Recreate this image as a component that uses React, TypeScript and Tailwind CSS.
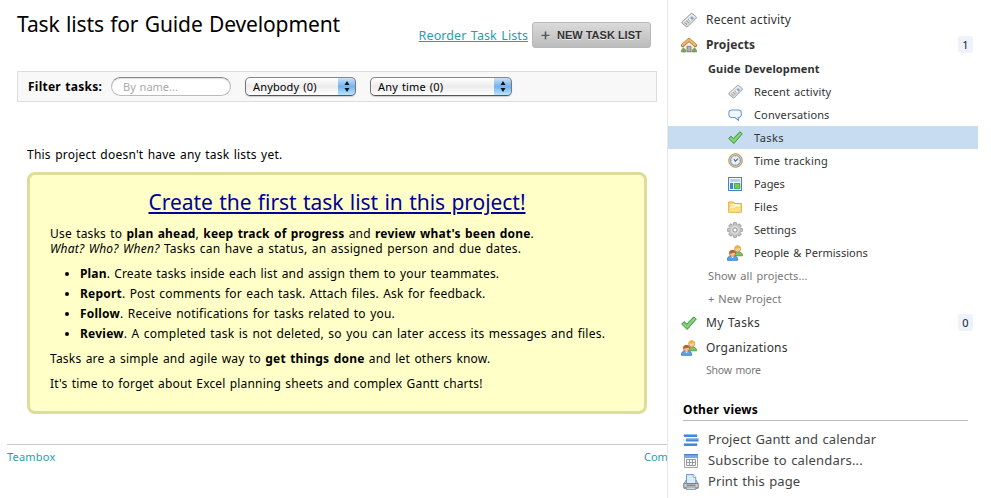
import type { ReactNode } from 'react';

function Icon({ size = 16, children }: { size?: number; children: ReactNode }) {
  return (
    <svg width={size} height={size} viewBox="0 0 16 16" className="shrink-0">
      {children}
    </svg>
  );
}

function TagIcon({ size }: { size?: number }) {
  return (
    <Icon size={size}>
      <path d="M1 9.800 10 1.600c.5-.4 1-.4 1.500 0l3.700 3.200c.4.400.4.900 0 1.400L6.800 14.600c-.5.500-1 .5-1.500.1L1 11.200c-.4-.4-.4-.9 0-1.400z" fill="#d6d6d6" stroke="#9a9a9a" strokeWidth=".9" />
      <path d="m2.400 10.300 8.200-7.400 3.300 2.800" fill="none" stroke="#f7f7f7" strokeWidth="1" />
      <path d="m3.600 10.500 2.500 2.100M5.500 8.800l2.500 2.100M7.300 7.200l1.700 1.500" stroke="#969696" strokeWidth="1" />
      <path d="m9.600 5.600 2 1.700-1.800 1.800-2-1.700z" fill="#f2f6fb" />
      <path d="m10.700 4.600 2.100 1.700-1.700 1.600-2-1.700z" fill="#6fa8e2" />
    </Icon>
  );
}

function HomeIcon() {
  return (
    <Icon>
      <path d="M2.300 8 8 3l5.700 5v6.700H2.300z" fill="#f7f4ec" stroke="#b9b3a6" strokeWidth=".8" />
      <path d="M6 9.300h4v5.400H6z" fill="#b5b1ad" stroke="#7f7b77" strokeWidth=".9" />
      <path d="M1.800 8.300 8 2.700l6.200 5.600" fill="none" stroke="#a96821" strokeWidth="3.500" strokeLinejoin="round" strokeLinecap="round" />
      <path d="M1.800 8.100 8 2.600l6.200 5.500" fill="none" stroke="#ecb96c" strokeWidth="2.200" strokeLinejoin="round" strokeLinecap="round" />
      <path d="M.5 15c-.4-2.200.7-3.700 2.300-3.500 1.500.2 2.200 1.700 1.800 3.500zM11.400 15c-.4-1.900.4-3.300 1.800-3.500 1.600-.1 2.700 1.400 2.300 3.500z" fill="#6cb85a" stroke="#3b7f35" strokeWidth=".5" />
      <circle cx="2.600" cy="13.300" r=".7" fill="#e16350" />
      <circle cx="13.400" cy="13.300" r=".7" fill="#e16350" />
    </Icon>
  );
}

function BubbleIcon({ size }: { size?: number }) {
  return (
    <Icon size={size}>
      <path d="M4.200 2.300h7.800a3.200 3.200 0 0 1 3.200 3.200v2.200a3.200 3.200 0 0 1-3.200 3.200h-.4l.3 3.200-3.900-3.200H4.200A3.200 3.200 0 0 1 1 7.700V5.500a3.200 3.200 0 0 1 3.200-3.200z" fill="#f1f8ff" stroke="#6a98d2" strokeWidth="1.200" />
    </Icon>
  );
}

function CheckIcon({ size }: { size?: number }) {
  return (
    <Icon size={size}>
      <path d="m.7 9 2.400-2.500 2.700 2.600 6.800-7.200L15.300 4 6.200 14.500z" fill="#73cb68" stroke="#3c9943" strokeWidth="1" strokeLinejoin="round" />
      <path d="m2.300 8.700 3.600 3.200 8-8.500" fill="none" stroke="#9be08e" strokeWidth="1" />
    </Icon>
  );
}

function ClockIcon({ size }: { size?: number }) {
  return (
    <Icon size={size}>
      <circle cx="8" cy="8" r="7.300" fill="#ecc886" stroke="#a98b58" strokeWidth=".9" />
      <circle cx="8" cy="8" r="5.300" fill="#edf5fd" stroke="#8ba5c6" strokeWidth="1.200" />
      <path d="M8 3.500v1M8 11.500v1M3.500 8h1M11.500 8h1" stroke="#8ba0b5" strokeWidth=".8" />
      <path d="m6.300 6.200 1.400 2.600 3-2.700" fill="none" stroke="#566f8a" strokeWidth="1.200" />
    </Icon>
  );
}

function PagesIcon({ size }: { size?: number }) {
  return (
    <Icon size={size}>
      <path d="M.6.600h14.800v14.800H.6z" fill="#f4faff" stroke="#4a82c5" strokeWidth="1.200" />
      <path d="M2.400 2.400h11.200v3H2.400z" fill="#a6d0f5" />
      <path d="M2.300 6.900h3.600v6.800H2.300z" fill="#3f84c6" />
      <path d="M7.400 7.400h6.100v6H7.400z" fill="#6cc95d" stroke="#3d9a41" strokeWidth="1" />
    </Icon>
  );
}

function FolderIcon({ size }: { size?: number }) {
  return (
    <Icon size={size}>
      <path d="M.8 14V2.300h5.700l1.200 1.700h7.500V14z" fill="#f9d87a" stroke="#e0a93a" strokeWidth="1.100" />
      <path d="M3.500 5.600h10M2.200 8.200h4.600l1.400-1.300h5.800" stroke="#fffbe3" strokeWidth="1.300" fill="none" />
      <path d="M1.500 9.400h13v4h-13z" fill="#fde08a" />
    </Icon>
  );
}

function GearIcon() {
  return (
    <Icon>
      {[0, 45, 90, 135].map((angle) => (
        <rect key={angle} x="6.300" y=".5" width="3.400" height="15" rx="1" fill="#c2c2c2" stroke="#909090" strokeWidth=".8" transform={`rotate(${angle} 8 8)`} />
      ))}
      <circle cx="8" cy="8" r="5.600" fill="#c6c6c6" />
      <circle cx="8" cy="8" r="4.200" fill="#dadada" />
      <circle cx="8" cy="8" r="2.100" fill="#fff" stroke="#949494" strokeWidth="1" />
    </Icon>
  );
}

function PeopleIcon() {
  return (
    <Icon>
      <path d="M7.200 10.800c0-2.800 1.100-4.100 3.400-4.100 3 0 4.900 1.200 4.900 4.100z" fill="#7cc860" stroke="#458f3d" strokeWidth=".8" />
      <circle cx="10.700" cy="3.900" r="3" fill="#f8cda0" stroke="#bd7c2f" strokeWidth=".6" />
      <path d="M7.600 4C7.200.9 9.300.2 11 .4c2.200.1 3.500 1.600 2.900 4-.9-.3-1.100-.9-1.200-1.700-1.300.8-3.500.5-5.100 1.300z" fill="#f0b23c" />
      <path d="M.5 15.300c-.2-3 1.200-4.400 3.500-4.400h2.900c2.500 0 3.900 1.500 3.700 4.400z" fill="#5da4ef" stroke="#2d6dbb" strokeWidth=".8" />
      <circle cx="5.500" cy="8.500" r="3.100" fill="#f5bd92" stroke="#9d5d31" strokeWidth=".6" />
      <path d="M2.300 8.800C1.800 5.600 3.900 4.900 5.600 5c2.300.1 3.600 1.500 3.200 3.800-.9-.3-1.200-.8-1.400-1.400-1.500.8-3.500.5-5.100 1.400z" fill="#b06532" />
      <path d="M3.900 11.500h3.200l-1.600 1.600z" fill="#fff" />
    </Icon>
  );
}

function GanttIcon() {
  return (
    <Icon>
      <path d="M0 3.500h15M0 8h16M0 12.500h15" stroke="#c3dcf6" strokeWidth="1" />
      <path d="M1 2h13v3H1zM3 6.500h12.500v3H3zM1 11h13v3H1z" fill="#4588d6" />
      <path d="M1 2h13v1H1zM3 6.500h12.500v1H3zM1 11h13v1H1z" fill="#8dbcf0" />
    </Icon>
  );
}

function CalendarIcon() {
  return (
    <Icon>
      <path d="M1.500 2h13v12.500h-13z" fill="#fafafa" stroke="#a3a3a3" />
      <path d="M1 1h14v4H1z" fill="#79aae6" />
      <path d="M1 1h14v1.200H1z" fill="#4a82c9" />
      <path d="M3.500 6.500h9v6h-9zM6.500 6.500v6M9.500 6.500v6M3.500 9.500h9" fill="none" stroke="#999" strokeWidth="1" />
    </Icon>
  );
}

function PrinterIcon() {
  return (
    <Icon>
      <path d="M1 9.500 3.200 6h9.600L15 9.500v4.800H1z" fill="#d8d8d8" stroke="#858585" strokeWidth=".9" />
      <path d="M3.500.6h6.700l2.600 2.600v6.300H3.500z" fill="#d9ebff" stroke="#5e8fca" strokeWidth=".9" />
      <path d="M10.200.6v2.700h2.600" fill="#fff" stroke="#5e8fca" strokeWidth=".7" />
      <path d="M.8 9.500h14.400v4.300H.8z" fill="#cfcfcf" stroke="#777" strokeWidth=".8" />
      <path d="M3.500 10.600h9v1.200h-9z" fill="#777" />
      <path d="M3.200 13h9.600v2.400H3.200z" fill="#c9defa" stroke="#828282" strokeWidth=".8" />
    </Icon>
  );
}

function PlusIcon() {
  return (
    <svg width="9" height="9" viewBox="0 0 9 9" className="shrink-0">
      <path d="M4.500 1v8M1 5.500h8" stroke="#f4f4f4" strokeWidth="1.200" />
      <path d="M4.500.500v8M.5 4.500h8" stroke="#555" strokeWidth="1.600" />
    </svg>
  );
}

function Select({ label, className }: { label: string; className: string }) {
  return (
    <div className={`flex h-[19px] overflow-hidden rounded-[5px] border border-[#777] border-t-[#888] border-b-[#555] bg-linear-to-b from-white via-[#ececec] to-white shadow-[0_1px_1px_#ccc] ${className}`}>
      <span className="flex-1 pl-[7px] text-[11px] leading-[17px] tracking-[0.15px] [word-spacing:1px]">{label}</span>
      <span className="-my-px -mr-px flex w-[18px] items-center justify-center rounded-r-[5px] border border-l-0 border-[#34539c] border-t-[#2b2b99] bg-linear-to-b from-[#cae3fa] via-[#73b2ef] to-[#b9e5ff]">
        <svg width="6" height="11" viewBox="0 0 6 11">
          <path d="m3 0 2.500 4h-5zM3 11 .5 7h5z" fill="#111" />
        </svg>
      </span>
    </div>
  );
}

function MainRow({ icon, label, className = '', count }: { icon: ReactNode; label: string; className?: string; count?: string }) {
  return (
    <div className="flex h-[25px] items-center pr-[5px] pl-[13px]">
      {icon}
      <span className={`ml-[9px] flex-1 text-[12px] ${className}`}>{label}</span>
      {count && <span className="flex h-[17px] w-[15px] items-center justify-center rounded-[3px] bg-[#ecf3fa] text-[11px] text-[#222]">{count}</span>}
    </div>
  );
}

function SubRow({ icon, label, className = '', active = false }: { icon: ReactNode; label: string; className?: string; active?: boolean }) {
  return (
    <div className={`flex h-[23px] items-center pl-[59px] ${active ? 'bg-[#c7dcf0]' : ''}`}>
      <span className="flex w-4 justify-center">{icon}</span>
      <span className={`ml-[11px] text-[11px] ${className}`}>{label}</span>
    </div>
  );
}

function ViewRow({ icon, label, className = '' }: { icon: ReactNode; label: string; className?: string }) {
  return (
    <div className="flex h-[21px] items-center">
      {icon}
      <span className={`ml-[9px] text-[13px] ${className}`}>{label}</span>
    </div>
  );
}

function Sidebar() {
  return (
    <aside className="h-[498px] w-[311px] shrink-0 border-l border-[#e8e8e8] pt-[7px] whitespace-nowrap text-[#333] [word-spacing:1px]">
      <MainRow icon={<TagIcon />} label="Recent activity" className="tracking-[0.2px]" />
      <MainRow icon={<HomeIcon />} label="Projects" className="font-bold tracking-[0.12px]" count="1" />
      <div className="flex h-[23px] items-center pl-10 text-[11px] font-bold tracking-[0.14px]">Guide Development</div>
      <SubRow icon={<TagIcon size={15} />} label="Recent activity" className="tracking-[0.12px]" />
      <SubRow icon={<BubbleIcon size={14} />} label="Conversations" className="tracking-[0.14px]" />
      <SubRow icon={<CheckIcon size={15} />} label="Tasks" className="tracking-[0.4px]" active />
      <SubRow icon={<ClockIcon size={15} />} label="Time tracking" className="tracking-[0.2px]" />
      <SubRow icon={<PagesIcon size={14} />} label="Pages" className="-tracking-[0.1px]" />
      <SubRow icon={<FolderIcon size={14} />} label="Files" className="tracking-[0.2px]" />
      <SubRow icon={<GearIcon />} label="Settings" className="tracking-[0.05px]" />
      <SubRow icon={<PeopleIcon />} label="People &amp; Permissions" className="tracking-normal" />
      <div className="flex h-[23px] items-center pl-10 text-[11px] tracking-[0.1px] text-[#777]">Show all projects...</div>
      <div className="flex h-[23px] items-center pl-10 text-[11px] tracking-[0.04px] text-[#777]">+ New Project</div>
      <MainRow icon={<CheckIcon />} label="My Tasks" className="tracking-[0.32px]" count="0" />
      <MainRow icon={<PeopleIcon />} label="Organizations" className="tracking-[0.2px]" />
      <div className="flex h-[22px] items-center pb-px pl-[38px] text-[10.500px] tracking-[-0.2px] text-[#777]">Show more</div>
      <section className="mt-[19px] mr-2.5 ml-[15px]">
        <h3 className="h-5 border-b border-[#bbb] text-[12px] leading-[17px] font-bold tracking-[0.2px] text-black">Other views</h3>
        <div className="mt-[8px] text-[#444]">
          <ViewRow icon={<GanttIcon />} label="Project Gantt and calendar" className="tracking-[0.08px]" />
          <ViewRow icon={<CalendarIcon />} label="Subscribe to calendars..." className="tracking-[0.17px]" />
          <ViewRow icon={<PrinterIcon />} label="Print this page" className="tracking-[0.08px]" />
        </div>
      </section>
    </aside>
  );
}

export default function App() {
  return (
    <div className="flex h-[498px] w-[991px] overflow-hidden bg-white font-['Noto_Sans',sans-serif] text-[12px] leading-[15px] text-black">
      <main className="h-[498px] w-[667px] shrink-0 overflow-hidden whitespace-nowrap [word-spacing:1px]">
        <header className="flex h-[71px] items-start pr-4 pl-[17px]">
          <h1 className="mt-[10px] flex-1 text-[21px] leading-7 -tracking-[0.12px]">Task lists for Guide Development</h1>
          <a className="mt-[27px] text-[12.5px] leading-[17px] tracking-[0.1px] text-[#2a9dab] underline">Reorder Task Lists</a>
          <button className="mt-[22px] ml-1 flex h-[26px] w-[119px] items-center rounded-[3px] border border-[#b8b8b8] bg-linear-to-b from-[#dadada] to-[#bcbcbc] pt-px pl-2 font-['Liberation_Sans',sans-serif] text-[11px] font-bold text-[#333] [text-shadow:0_1px_0_#eee] [word-spacing:0]">
            <PlusIcon />
            <span className="ml-[7px]">NEW TASK LIST</span>
          </button>
        </header>
        <form className="ml-[17px] flex h-[31px] w-[640px] items-center border border-[#ddd] bg-[#f8f8f8] pl-2.5">
          <label className="w-[83px] font-bold tracking-[0.25px]">Filter tasks:</label>
          <span className="h-[19px] w-[120px] rounded-full border border-[#bbb] border-t-[#888] bg-white pl-[11px] text-[11px] leading-[18px] text-[#aaa] shadow-[inset_0_1px_1px_#ddd]">By name...</span>
          <Select label="Anybody (0)" className="ml-[14px] w-[111px]" />
          <Select label="Any time (0)" className="ml-[14px] w-[142px]" />
        </form>
        <p className="mt-[45px] ml-[27px] tracking-[0.22px]">This project doesn't have any task lists yet.</p>
        <section className="mt-[10px] ml-[27px] h-[242px] w-[620px] rounded-[8px] border-[3px] border-[#dddd99] bg-[#ffffc8] px-5 pt-[13px]">
          <h2 className="text-center text-[21px] leading-7 -tracking-[0.05px] text-[#000099]"><a className="underline">Create the first task list in this project!</a></h2>
          <p className="mt-[10px] tracking-[0.18px]">Use tasks to <b>plan ahead</b>, <b>keep track of progress</b> and <b>review what's been done</b>.</p>
          <p className="tracking-[0.23px]"><i>What? Who? When?</i> Tasks can have a status, an assigned person and due dates.</p>
          <ul className="mt-[10px] ml-[30px] list-disc space-y-[5px]">
            <li className="tracking-[0.15px]"><b>Plan</b>. Create tasks inside each list and assign them to your teammates.</li>
            <li className="tracking-[0.2px]"><b>Report</b>. Post comments for each task. Attach files. Ask for feedback.</li>
            <li className="tracking-[0.2px]"><b>Follow</b>. Receive notifications for tasks related to you.</li>
            <li className="tracking-[0.23px]"><b>Review</b>. A completed task is not deleted, so you can later access its messages and files.</li>
          </ul>
          <p className="mt-[10px] tracking-[0.2px]">Tasks are a simple and agile way to <b>get things done</b> and let others know.</p>
          <p className="mt-[10px] tracking-[0.16px]">It's time to forget about Excel planning sheets and complex Gantt charts!</p>
        </section>
        <footer className="mt-[30px] ml-[7px] flex border-t border-[#ccc] pt-[4px] text-[11px] text-[#2a9dab]">
          <a className="w-[637px] shrink-0 tracking-[0.2px]">Teambox</a>
          <a>Community</a>
        </footer>
      </main>
      <Sidebar />
    </div>
  );
}
